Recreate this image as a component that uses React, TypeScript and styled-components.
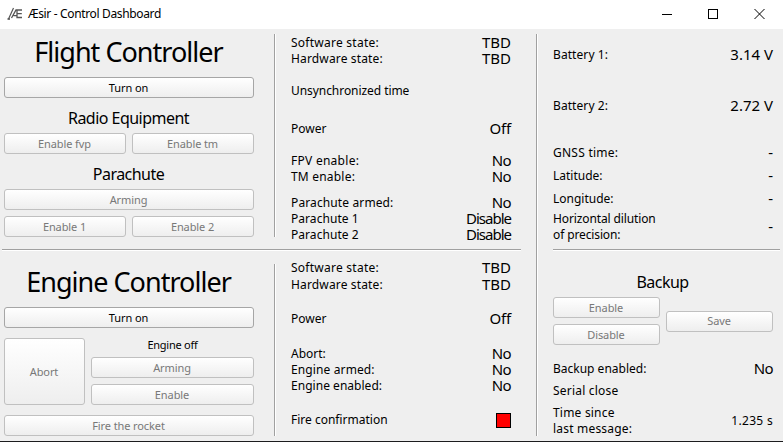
import React from "react";
import styled, { createGlobalStyle } from "styled-components";

const GlobalStyle = createGlobalStyle`
  * { box-sizing: border-box; }
  html, body { margin: 0; padding: 0; overflow: hidden; background: #efefef; }
`;

const Window = styled.div`
  width: 783px;
  height: 442px;
  display: flex;
  flex-direction: column;
  background: #efefef;
  border-bottom: 1px solid #1c1c1e;
  color: #000;
  font: 12px/16px "Noto Sans", "Open Sans", sans-serif;
  white-space: nowrap;
  cursor: default;
`;

const TitleBar = styled.header`
  height: 29px;
  flex: none;
  display: flex;
  align-items: center;
  padding: 0 17px 2px 7px;
  background: #fff;
`;

const Title = styled.span`
  margin-left: 5px;
  flex: 1;
  font-size: 12px;
  letter-spacing: -0.35px;
`;

const WindowControls = styled.div`
  display: flex;
  gap: 34px;
`;

const Body = styled.main`
  display: grid;
  grid-template-columns: 536px 247px;
  flex: 1;
`;

const Controllers = styled.div`
  display: grid;
  grid-template-rows: 220px 2px 190px;
`;

const Controller = styled.section`
  display: grid;
  grid-template-columns: 274px 262px;
`;

const Divider = styled.div<{ $left?: number; $right?: number; $top?: number }>`
  height: 2px;
  margin: ${(p) => p.$top ?? 0}px ${(p) => p.$right ?? 0}px 0 ${(p) => p.$left ?? 0}px;
  background: linear-gradient(#a0a0a0 50%, #fff 50%);
`;

const Side = styled.div<{ $top: number; $height: number }>`
  background: linear-gradient(90deg, #a0a0a0 1px, #fff 1px) 0 ${(p) => p.$top}px / 2px
    ${(p) => p.$height}px no-repeat;
`;

const Readouts = styled(Side)`
  padding: 0 25px 0 17px;
`;

const Telemetry = styled(Side)`
  padding: 0 0 0 17px;
`;

const Fields = styled.div`
  width: 220px;
`;

const Controls = styled.div`
  padding-left: 4px;
  width: 254px;
`;

const Heading = styled.h1<{ $top: number }>`
  margin: ${(p) => p.$top}px 0 0;
  padding-right: 1px;
  height: 36px;
  font-size: 27px;
  line-height: 36px;
  font-weight: 400;
  text-align: center;
  letter-spacing: -0.98px;
`;

const Subheading = styled.h2<{ $top: number }>`
  margin: ${(p) => p.$top}px 0 0;
  padding-right: 1px;
  height: 20px;
  font-size: 16px;
  line-height: 20px;
  font-weight: 400;
  text-align: center;
  letter-spacing: -0.53px;
`;

const Button = styled.button<{ $height?: number }>`
  display: block;
  width: 100%;
  height: ${(p) => p.$height ?? 21}px;
  padding: 0 1px 0 0;
  border: 1px solid #a6a6a6;
  border-radius: 3px;
  background: linear-gradient(#fff, #eee);
  color: #000;
  font: 11px/14px "Noto Sans", "Open Sans", sans-serif;
  letter-spacing: -0.1px;
  &:disabled {
    border-color: #c0c0c0;
    color: #787878;
  }
`;

const Spaced = styled.div<{ $top: number }>`
  margin-top: ${(p) => p.$top}px;
`;

const ButtonRow = styled(Spaced)<{ $columns?: string }>`
  display: grid;
  grid-template-columns: ${(p) => p.$columns ?? "1fr 1fr"};
  gap: 6px;
  align-items: center;
`;

const Stack = styled.div`
  display: flex;
  flex-direction: column;
  gap: 6px;
`;

const EngineStatus = styled.div`
  height: 13px;
  font-size: 11px;
  line-height: 14px;
  text-align: center;
  letter-spacing: -0.25px;
`;

const FieldRow = styled.div<{ $top: number; $tall?: boolean }>`
  display: flex;
  justify-content: space-between;
  align-items: center;
  height: ${(p) => (p.$tall ? 32 : 16)}px;
  margin-top: ${(p) => p.$top}px;
`;

const Label = styled.span<{ $ls?: number }>`
  white-space: pre;
  letter-spacing: ${(p) => p.$ls ?? 0}px;
`;

const Value = styled.span<{ $size?: number; $ls?: number }>`
  font-size: ${(p) => p.$size ?? 15}px;
  letter-spacing: ${(p) => p.$ls ?? 0}px;
  margin-bottom: ${(p) => (p.$size ? 0 : 2)}px;
`;

const Lamp = styled.span`
  width: 15px;
  height: 15px;
  border: 1px solid #000;
  background: #f00;
`;

const valueTracking: Record<string, number> = {
  No: -0.6,
  Disable: -1,
  Off: -0.2,
  "1.235 s": 0.3,
};

interface FieldProps {
  top: number;
  label: string;
  value?: string;
  size?: number;
  tall?: boolean;
  ls?: number;
}

const Field = ({ top, label, value, size, tall, ls }: FieldProps) => (
  <FieldRow $top={top} $tall={tall}>
    <Label $ls={ls}>{label}</Label>
    {value && (
      <Value $size={size} $ls={valueTracking[value]}>
        {value}
      </Value>
    )}
  </FieldRow>
);

const Logo = () => (
  <svg width="16" height="14" viewBox="0 0 16 14" fill="none" stroke="#555">
    <path d="M1.500 12 6.500 1" strokeWidth="1.2" />
    <path d="M.5 12h2.500" strokeWidth="1.6" />
    <path d="M4.500 11 9 3h6M10 3v7.500h5M10 6.700h4.800M6.500 8.700h3.500" strokeWidth="1.3" />
  </svg>
);

export default function App() {
  return (
    <>
      <GlobalStyle />
      <Window>
        <TitleBar>
          <Logo />
          <Title>Æsir - Control Dashboard</Title>
          <WindowControls>
            <svg width="12" height="12" stroke="#000" shapeRendering="crispEdges">
              <path d="M0 6.5h10" />
            </svg>
            <svg width="12" height="12" stroke="#000" fill="none" shapeRendering="crispEdges">
              <path d="M.5 1.5h9v9h-9z" />
            </svg>
            <svg width="12" height="12" stroke="#000">
              <path d="m.5 1 10 10M10.500 1 .5 11" />
            </svg>
          </WindowControls>
        </TitleBar>
        <Body>
          <Controllers>
            <Controller>
              <Controls>
                <Heading $top={5}>Flight Controller</Heading>
                <Spaced $top={7}><Button>Turn on</Button></Spaced>
                <Subheading $top={10}>Radio Equipment</Subheading>
                <ButtonRow $top={5}>
                  <Button disabled>Enable fvp</Button>
                  <Button disabled>Enable tm</Button>
                </ButtonRow>
                <Subheading $top={10}>Parachute</Subheading>
                <Spaced $top={5}><Button disabled>Arming</Button></Spaced>
                <ButtonRow $top={6}>
                  <Button disabled>Enable 1</Button>
                  <Button disabled>Enable 2</Button>
                </ButtonRow>
              </Controls>
              <Readouts $top={5} $height={203}>
                <Field top={6} label="Software state:" value="TBD" ls={0.25} />
                <Field top={0} label="Hardware state:" value="TBD" ls={0.15} />
                <Field top={16} label="Unsynchronized time" ls={-0.06} />
                <Field top={22} label="Power" value="Off" />
                <Field top={16} label="FPV enable:" value="No" ls={0.27} />
                <Field top={0} label="TM enable:" value="No" ls={0.2} />
                <Field top={10} label="Parachute armed:" value="No" ls={0.12} />
                <Field top={0} label="Parachute 1" value="Disable" ls={0.05} />
                <Field top={0} label="Parachute 2" value="Disable" ls={0.05} />
              </Readouts>
            </Controller>
            <Divider $left={2} $right={15} />
            <Controller>
              <Controls>
                <Heading $top={13}>Engine Controller</Heading>
                <Spaced $top={7}><Button>Turn on</Button></Spaced>
                <ButtonRow $top={10} $columns="81px 163px">
                  <Button disabled $height={67}>Abort</Button>
                  <Stack>
                    <EngineStatus>Engine off</EngineStatus>
                    <Button disabled>Arming</Button>
                    <Button disabled>Enable</Button>
                  </Stack>
                </ButtonRow>
                <Spaced $top={10}><Button disabled>Fire the rocket</Button></Spaced>
              </Controls>
              <Readouts $top={13} $height={172}>
                <Field top={9} label="Software state:" value="TBD" ls={0.25} />
                <Field top={1} label="Hardware state:" value="TBD" ls={0.15} />
                <Field top={18} label="Power" value="Off" />
                <Field top={19} label="Abort:" value="No" />
                <Field top={0} label="Engine armed:" value="No" ls={0.12} />
                <Field top={0} label="Engine enabled:" value="No" ls={0.03} />
                <FieldRow $top={18}>
                  <Label>Fire confirmation</Label>
                  <Lamp />
                </FieldRow>
              </Readouts>
            </Controller>
          </Controllers>
          <Telemetry $top={5} $height={402}>
            <Fields>
              <Field top={18} label="Battery 1:" value="3.14 V" ls={0.08} />
              <Field top={35} label="Battery 2:" value="2.72 V" ls={0.08} />
              <Field top={31} label="GNSS time:" value="-" ls={0.25} />
              <Field top={7} label="Latitude:" value="-" />
              <Field top={7} label="Longitude:" value="-" />
              <Field top={4} label={"Horizontal dilution\nof precision:"} value="-" ls={-0.12} tall />
            </Fields>
            <Divider $top={6} $right={3} />
            <Fields>
              <Subheading $top={21}>Backup</Subheading>
              <ButtonRow $top={5}>
                <Stack>
                  <Button disabled>Enable</Button>
                  <Button disabled>Disable</Button>
                </Stack>
                <Button disabled>Save</Button>
              </ButtonRow>
              <Field top={16} label="Backup enabled:" value="No" />
              <Field top={6} label="Serial close" ls={0.2} />
              <Field top={6} label={"Time since\nlast message:"} value="1.235 s" size={12} ls={0.2} tall />
            </Fields>
          </Telemetry>
        </Body>
      </Window>
    </>
  );
}
